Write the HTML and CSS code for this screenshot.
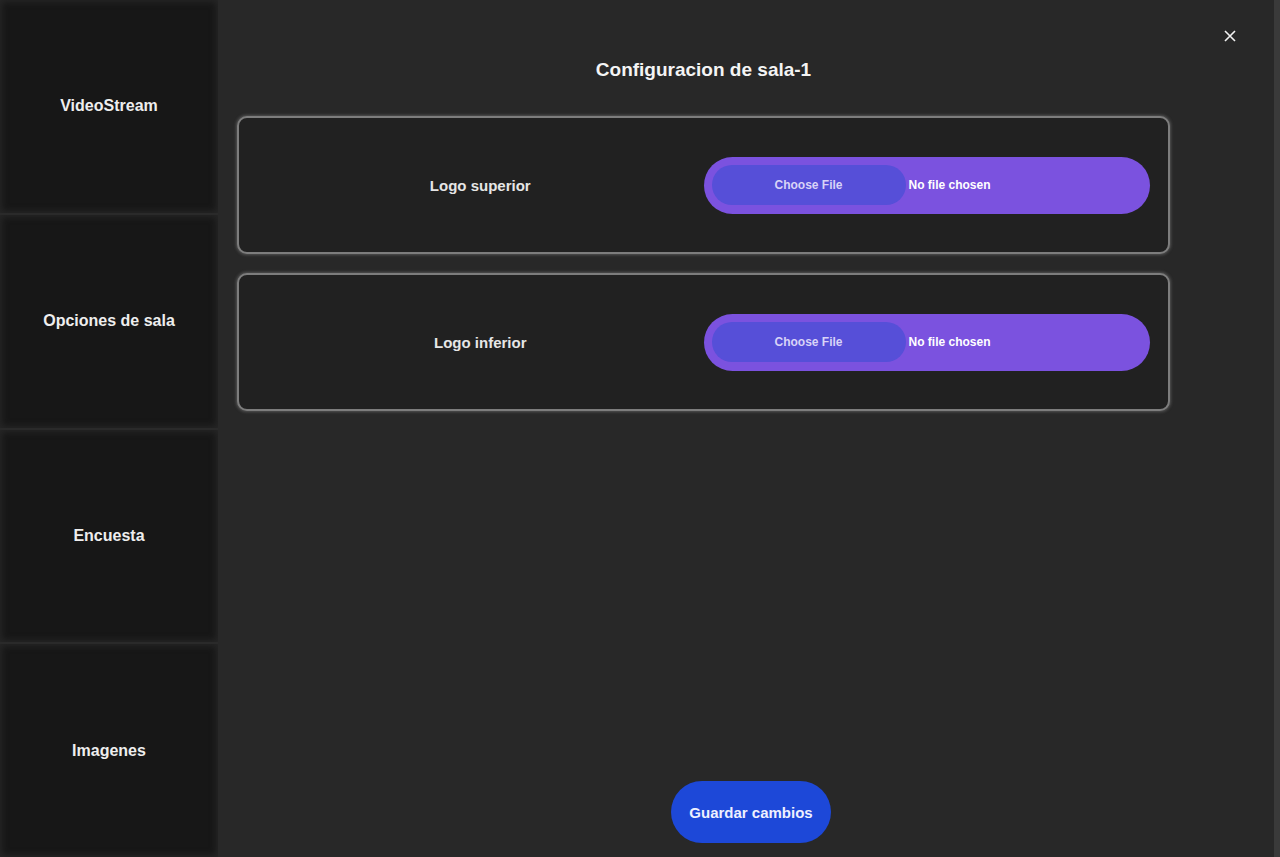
FILE: index.html
```html
<!DOCTYPE html>
<html lang="es">
<head>
<meta charset="utf-8">
<title>Configuracion de sala-1</title>
<link rel="stylesheet" href="styles.css">
</head>
<body>
<div class="app">
  <nav class="sidebar">
    <div class="nav-item">VideoStream</div>
    <div class="nav-item">Opciones de sala</div>
    <div class="nav-item">Encuesta</div>
    <div class="nav-item">Imagenes</div>
  </nav>
  <main class="main">
    <button class="close" aria-label="Cerrar">
      <svg width="12" height="12" viewBox="0 0 12 12"><path d="M1 1L11 11M11 1L1 11" stroke="#f2f2f2" stroke-width="1.6" fill="none"/></svg>
    </button>
    <div class="content">
      <h1 class="title">Configuracion de sala-1</h1>
      <div class="card">
        <div class="card-label">Logo superior</div>
        <div class="card-field">
          <div class="file">
            <span class="file-btn">Choose File</span>
            <span class="file-text">No file chosen</span>
          </div>
        </div>
      </div>
      <div class="card">
        <div class="card-label">Logo inferior</div>
        <div class="card-field">
          <div class="file">
            <span class="file-btn">Choose File</span>
            <span class="file-text">No file chosen</span>
          </div>
        </div>
      </div>
    </div>
    <div class="footer">
      <button class="save">Guardar cambios</button>
    </div>
  </main>
</div>
</body>
</html>
```
FILE: styles.css
```css
* { box-sizing: border-box; }
html, body { margin: 0; padding: 0; }
body {
  background: #282828;
  font-family: "Liberation Sans", Arial, sans-serif;
  color: #f0f0f0;
}
.app {
  display: flex;
  height: 857px;
  overflow: hidden;
}
.sidebar {
  width: 218px;
  flex: none;
  display: flex;
  flex-direction: column;
  gap: 2px;
  background: #2a2a2a;
}
.nav-item {
  flex: 1;
  display: flex;
  align-items: center;
  justify-content: center;
  background: #171717;
  box-shadow: inset 0 0 6px 2px rgba(40,40,40,0.9);
  font-weight: bold;
  font-size: 16px;
  color: #eeeeee;
}
.main {
  flex: 1;
  position: relative;
  display: flex;
  flex-direction: column;
  border-right: 6px solid #3a3a3a;
  background: #282828;
}
.close {
  position: absolute;
  top: 30px;
  right: 38px;
  width: 12px;
  height: 12px;
  padding: 0;
  border: 0;
  background: none;
  display: flex;
}
.content {
  margin-left: 19px;
  width: 933px;
  flex: 1;
  display: flex;
  flex-direction: column;
  gap: 19px;
}
.title {
  margin: 59px 0 16px;
  text-align: center;
  font-size: 19px;
  line-height: 22px;
  font-weight: bold;
  color: #f4f4f4;
}
.card {
  height: 138px;
  display: flex;
  align-items: center;
  padding: 0 18px;
  background: #212121;
  border: 2px solid #7d7d7d;
  border-radius: 10px;
  box-shadow: 0 0 3px 1px rgba(140,140,140,0.45);
}
.card-label {
  flex: 1;
  text-align: center;
  font-weight: bold;
  font-size: 15px;
  color: #e6e6e6;
}
.card-field {
  flex: 1;
}
.file {
  height: 57px;
  display: flex;
  align-items: center;
  padding-left: 8px;
  background: #7b52df;
  border-radius: 29px;
}
.file-btn {
  width: 194px;
  height: 40px;
  display: flex;
  align-items: center;
  justify-content: center;
  background: #564fd8;
  border-radius: 20px;
  font-size: 12px;
  font-weight: bold;
  color: #d9d3f7;
}
.file-text {
  margin-left: 3px;
  font-size: 12px;
  font-weight: bold;
  color: #ffffff;
}
.footer {
  display: flex;
  justify-content: center;
  padding: 0 0 14px 10px;
}
.save {
  width: 160px;
  height: 62px;
  border: 0;
  border-radius: 31px;
  background: #1d48d8;
  color: #eef0ff;
  font-family: "Liberation Sans", Arial, sans-serif;
  font-size: 15px;
  font-weight: bold;
}
```
